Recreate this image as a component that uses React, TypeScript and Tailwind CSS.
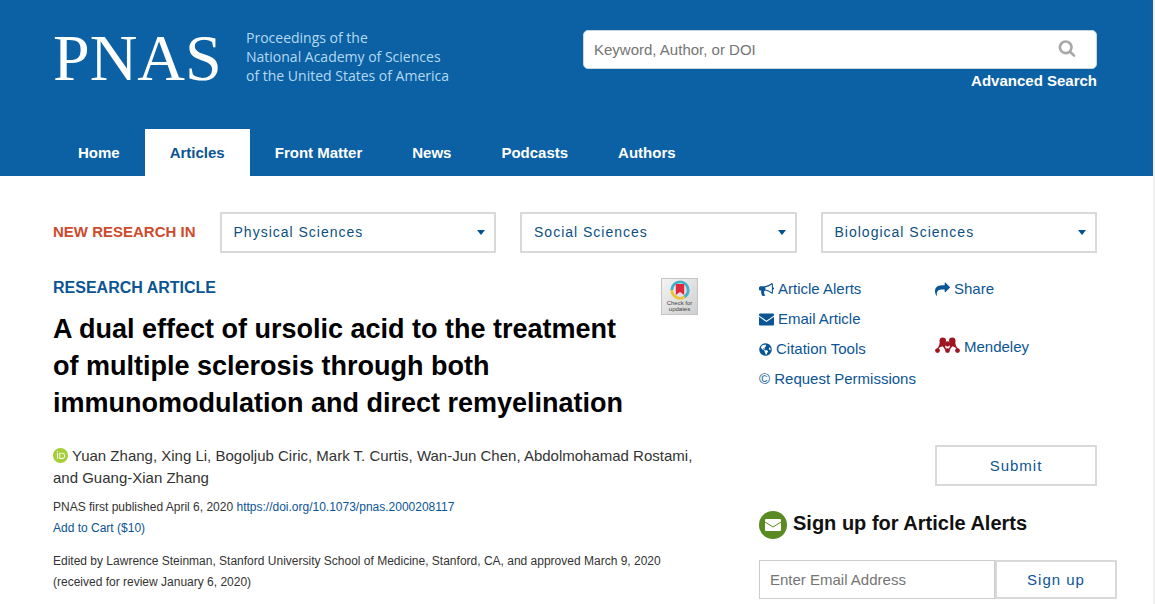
import React from "react";
import { FaGlobeAmericas } from "react-icons/fa";
import { SiOrcid } from "react-icons/si";

const navItems = ["Home", "Articles", "Front Matter", "News", "Podcasts", "Authors"];
const subjects = ["Physical Sciences", "Social Sciences", "Biological Sciences"];

const SearchIcon = () => (
  <svg viewBox="0 0 1792 1792" fill="currentColor" className="size-[18px]">
    <path d="M1216 832q0-185-131.5-316.5t-316.5-131.5-316.5 131.5-131.5 316.5 131.5 316.5 316.5 131.5 316.5-131.5 131.5-316.5zm512 832q0 52-38 90t-90 38q-54 0-90-38l-343-342q-179 124-399 124-143 0-273.5-55.5t-225-150-150-225-55.5-273.5 55.5-273.5 150-225 225-150 273.5-55.5 273.5 55.5 225 150 150 225 55.5 273.5q0 220-124 399l343 343q37 37 37 90z" />
  </svg>
);

const BullhornIcon = () => (
  <svg viewBox="0 0 1792 1792" fill="currentColor" className="size-[15px]">
    <path d="M1664 640q53 0 90.5 37.5t37.5 90.5-37.5 90.5-90.5 37.5v384q0 52-38 90t-90 38q-417-347-812-380-58 19-91 66t-31 100.5 40 92.5q-20 33-23 65.5t6 58 33.5 55 48 50 61.5 50.5q-29 58-111.5 83t-168.5 11.5-132-55.5q-7-23-29.5-87.5t-32-94.5-23-89-15-101 3.5-98.5 22-110.5h-122q-66 0-113-47t-47-113v-192q0-66 47-113t113-47h480q435 0 896-384 52 0 90 38t38 90v384zm-128 604v-954q-394 302-768 343v270q377 42 768 341z" />
  </svg>
);

const EnvelopeIcon = () => (
  <svg viewBox="0 0 15 15" fill="currentColor" className="size-[15px]">
    <path d="M1 1.500h13a1 1 0 0 1 1 1v1L7.500 8.800 0 3.500v-1a1 1 0 0 1 1-1z" />
    <path d="M0 4.800l7.500 5.300L15 4.800V12.500a1 1 0 0 1-1 1H1a1 1 0 0 1-1-1z" />
  </svg>
);

const ShareIcon = () => (
  <svg viewBox="0 0 1792 1792" fill="currentColor" className="size-[15px]">
    <path d="M1792 640q0 26-19 45l-512 512q-19 19-45 19t-45-19-19-45v-256h-224q-98 0-175.500 6t-154 21.500-133 42.500-105.500 69.500-80 101-48.500 138.500-17.500 181q0 55 5 123 0 6 2.500 23.500t2.500 26.500q0 15-8.500 25t-23.500 10q-16 0-28-17-7-9-13-22t-13.500-30-10.500-24q-127-285-127-451 0-199 53-333 162-403 875-403h224v-256q0-26 19-45t45-19 45 19l512 512q19 19 19 45z" />
  </svg>
);

const MendeleyIcon = () => (
  <svg viewBox="0 0 25 20" fill="#9d1620" className="h-5 w-[25px]">
    <circle cx="7.800" cy="3.600" r="3.200" />
    <circle cx="17.200" cy="3.600" r="3.200" />
    <circle cx="12.500" cy="6.800" r="2.600" />
    <circle cx="2.500" cy="13.600" r="2.400" />
    <circle cx="12.500" cy="13.600" r="2.400" />
    <circle cx="22.500" cy="13.600" r="2.400" />
    <path d="M4.700 3.600c.2 3-.4 5.600-2.600 8l1.200.6c1.400-2.200 3.600-3.400 5-2.200.8.800.8 1.800 2.200 3l1.100-.8c-1.500-1.500-1.900-3.400-1-5.200L9 5z" />
    <path d="M20.300 3.600c-.2 3 .4 5.600 2.600 8l-1.200.6c-1.400-2.200-3.600-3.400-5-2.200-.8.800-.8 1.800-2.200 3l-1.100-.8c1.500-1.500 1.900-3.400 1-5.200L16 5z" />
  </svg>
);

const AlertIcon = () => (
  <svg viewBox="0 0 28 28" className="size-7 shrink-0">
    <circle cx="14" cy="14" r="14" fill="#5a8a22" />
    <rect x="6" y="8" width="16" height="12" rx="1" fill="#fff" />
    <path d="M6 11l8 5 8-5" fill="none" stroke="#5a8a22" strokeWidth="1" />
  </svg>
);

const CheckForUpdates = () => (
  <button
    type="button"
    className="flex size-[37px] shrink-0 flex-col items-center border border-[#c4c4c4] bg-linear-to-br from-[#f4f4f4] to-[#cfcfcf] pt-px text-[#444]"
  >
    <svg viewBox="0 0 20 20" className="size-5">
      <g fill="none" strokeWidth="2.800">
        <path d="M10 1.800A8.200 8.200 0 0 1 18.200 10 8.200 8.200 0 0 1 14.500 16.900" stroke="#41b1c9" />
        <path d="M14.500 16.900A8.200 8.200 0 0 1 1.800 10" stroke="#ecc23c" />
        <path d="M1.800 10A8.200 8.200 0 0 1 10 1.800" stroke="#41b1c9" />
      </g>
      <path d="M5.800 4h8.400v11l-4.200-3-4.200 3z" fill="#e0283c" />
    </svg>
    <span className="text-[6px] leading-[6px]">
      Check for
      <br />
      updates
    </span>
  </button>
);

const Header = () => (
  <header className="bg-[#0b61a4] pr-14 pl-[53px] text-white">
    <div className="flex h-[129px] items-start justify-between pt-7">
      <a href="#" className="flex items-start">
        <span className="w-[193px] font-[Liberation_Serif,serif] text-[66px] leading-[60px]">PNAS</span>
        <span className="font-['Open_Sans',sans-serif] text-sm leading-[19px] text-[#b5d9f3]">
          Proceedings of the
          <br />
          National Academy of Sciences
          <br />
          of the United States of America
        </span>
      </a>
      <form className="w-[514px] pt-0.5">
        <div className="flex h-[39px] items-center rounded-[5px] border border-[#c9d6e0] bg-white pr-5">
          <input
            type="text"
            aria-label="Search"
            placeholder="Keyword, Author, or DOI"
            className="h-full flex-1 px-2.5 text-[15px] text-gray-700 outline-none placeholder:text-[#757575]"
          />
          <button type="button" aria-label="Search" className="pb-1 text-[#a8a8a8]">
            <SearchIcon />
          </button>
        </div>
        <div className="text-right text-[15px] leading-6 font-bold">
          <a href="#">Advanced Search</a>
        </div>
      </form>
    </div>
    <nav className="flex">
      {navItems.map((item) => (
        <a
          key={item}
          href="#"
          className={`px-[25px] text-[15px] leading-[47px] font-bold ${item === "Articles" ? "bg-white text-[#0b5594]" : ""}`}
        >
          {item}
        </a>
      ))}
    </nav>
  </header>
);

const Subjects = () => (
  <div className="flex items-center gap-6">
    <span className="text-[15px] font-bold text-[#cf4a2c]">NEW RESEARCH IN</span>
    {subjects.map((subject) => (
      <div key={subject} className="relative flex-1">
        <select
          aria-label={subject}
          className="h-[41px] w-full appearance-none border-2 border-[#d9d9d9] bg-white px-3 pb-0.5 text-sm tracking-[1px] text-[#0b5080]"
        >
          <option>{subject}</option>
        </select>
        <svg viewBox="0 0 8 5" className="pointer-events-none absolute top-[18px] right-[11px] h-[5px] w-2" fill="#00538f">
          <path d="M0 0h8L4 5z" />
        </svg>
      </div>
    ))}
  </div>
);

const Article = () => (
  <main className="flex-1 pt-0.5">
    <div className="flex justify-between">
      <div>
        <div className="text-base leading-6 font-bold text-[#0b5594]">RESEARCH ARTICLE</div>
        <h1 className="mt-[11px] text-[27px] leading-[37px] font-bold text-black">
          A dual effect of ursolic acid to the treatment
          <br />
          of multiple sclerosis through both
          <br />
          immunomodulation and direct remyelination
        </h1>
      </div>
      <div className="pt-0.5">
        <CheckForUpdates />
      </div>
    </div>
    <p className="mt-[23px] text-[15px] leading-[21px]">
      <SiOrcid className="mr-1 mb-1 inline size-[15px] text-[#a6ce39]" />
      Yuan Zhang, Xing Li, Bogoljub Ciric, Mark T. Curtis, Wan-Jun Chen, Abdolmohamad Rostami, and Guang-Xian Zhang
    </p>
    <div className="mt-[9px] text-xs leading-[21px]">
      <p>
        PNAS first published April 6, 2020{" "}
        <a href="#" className="text-[#0b5594]">
          https://doi.org/10.1073/pnas.2000208117
        </a>
      </p>
      <a href="#" className="text-[#0b5594]">
        Add to Cart ($10)
      </a>
      <p className="mt-3">
        Edited by Lawrence Steinman, Stanford University School of Medicine, Stanford, CA, and approved March 9, 2020
        (received for review January 6, 2020)
      </p>
    </div>
  </main>
);

const Sidebar = () => (
  <aside className="w-[338px] shrink-0 text-[15px] text-[#0b5594]">
    <div className="flex leading-[30px]">
      <div className="w-[176px]">
        <a href="#" className="flex items-center gap-1">
          <BullhornIcon />
          Article Alerts
        </a>
        <a href="#" className="flex items-center gap-1">
          <EnvelopeIcon />
          Email Article
        </a>
        <a href="#" className="flex items-center gap-1">
          <FaGlobeAmericas className="size-[13px]" />
          Citation Tools
        </a>
        <a href="#" className="block">
          © Request Permissions
        </a>
      </div>
      <div>
        <a href="#" className="flex items-center gap-1">
          <ShareIcon />
          Share
        </a>
        <a href="#" className="mt-7 flex items-center gap-1">
          <MendeleyIcon />
          Mendeley
        </a>
      </div>
    </div>
    <div className="mt-[51px] flex justify-end">
      <button type="button" className="h-[41px] w-[162px] border-2 border-[#d9d9d9] pt-0.5 tracking-[1px]">
        Submit
      </button>
    </div>
    <div className="mt-[25px] flex items-start gap-1.5">
      <AlertIcon />
      <h2 className="text-xl leading-6 font-bold text-[#111]">Sign up for Article Alerts</h2>
    </div>
    <form className="mt-[21px] -mr-5 flex h-[39px]">
      <input
        type="email"
        aria-label="Enter Email Address"
        placeholder="Enter Email Address"
        className="min-w-0 flex-1 border border-[#ccc] px-2.5 pt-0.5 outline-none placeholder:text-[#757575]"
      />
      <button type="button" className="w-[122px] border-2 border-[#d9d9d9] pt-0.5 tracking-[1px]">
        Sign up
      </button>
    </form>
  </aside>
);

const App = () => {
  return (
    <div className="min-h-screen border-r-2 border-[#f1f1f1] bg-white font-['Liberation_Sans',Arial,sans-serif] text-[#333]">
      <Header />
      <div className="pt-9 pr-14 pl-[53px]">
        <Subjects />
        <div className="mt-[21px] flex gap-[61px]">
          <Article />
          <Sidebar />
        </div>
      </div>
    </div>
  );
};

export default App;
